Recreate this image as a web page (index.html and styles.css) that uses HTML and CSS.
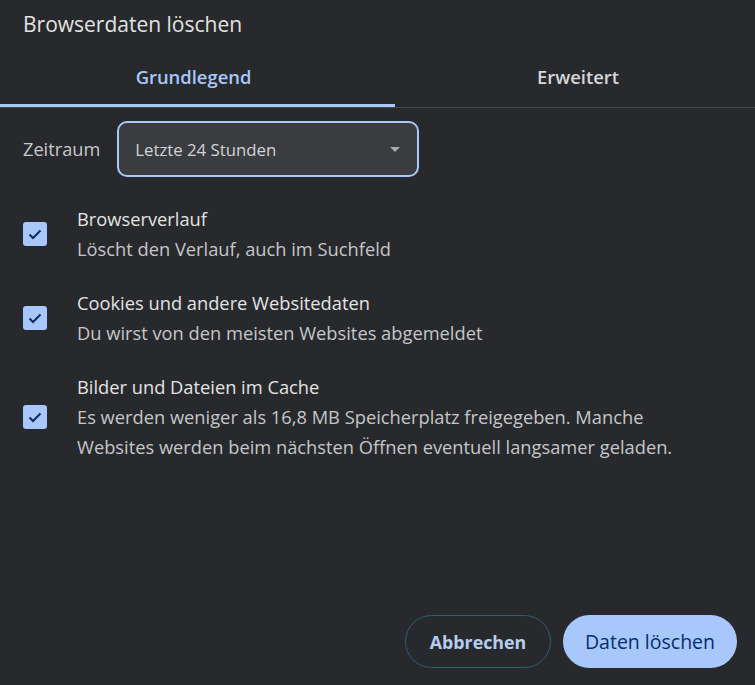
FILE: index.html
```html
<!DOCTYPE html>
<html lang="de">
<head>
  <meta charset="UTF-8">
  <title>Browserdaten löschen</title>
  <link rel="stylesheet" href="styles.css">
</head>
<body>
  <div class="dialog">
    <h1>Browserdaten löschen</h1>

    <div class="tabs">
      <div class="tab active">Grundlegend</div>
      <div class="tab">Erweitert</div>
    </div>

    <div class="range">
      <span class="range-label">Zeitraum</span>
      <div class="select">
        <span>Letzte 24 Stunden</span>
        <span class="arrow"></span>
      </div>
    </div>

    <div class="options">
      <div class="option">
        <span class="check"><svg viewBox="0 0 24 24" width="24" height="24"><path d="M6.5 12.5l3.5 3.5l7.5-7.5" fill="none" stroke="#0b2a5e" stroke-width="2"/></svg></span>
        <div class="option-text">
          <div class="option-title">Browserverlauf</div>
          <div class="option-desc">Löscht den Verlauf, auch im Suchfeld</div>
        </div>
      </div>
      <div class="option">
        <span class="check"><svg viewBox="0 0 24 24" width="24" height="24"><path d="M6.5 12.5l3.5 3.5l7.5-7.5" fill="none" stroke="#0b2a5e" stroke-width="2"/></svg></span>
        <div class="option-text">
          <div class="option-title">Cookies und andere Websitedaten</div>
          <div class="option-desc">Du wirst von den meisten Websites abgemeldet</div>
        </div>
      </div>
      <div class="option">
        <span class="check"><svg viewBox="0 0 24 24" width="24" height="24"><path d="M6.5 12.5l3.5 3.5l7.5-7.5" fill="none" stroke="#0b2a5e" stroke-width="2"/></svg></span>
        <div class="option-text">
          <div class="option-title">Bilder und Dateien im Cache</div>
          <div class="option-desc">Es werden weniger als 16,8 MB Speicherplatz freigegeben. Manche Websites werden beim nächsten Öffnen eventuell langsamer geladen.</div>
        </div>
      </div>
    </div>

    <div class="actions">
      <button class="btn-outline">Abbrechen</button>
      <button class="btn-filled">Daten löschen</button>
    </div>
  </div>
</body>
</html>
```

FILE: styles.css
```css
body {
  margin: 0;
  background-color: #28292c;
  color: #e3e3e3;
  font-family: 'Open Sans', sans-serif;
}
.dialog {
  display: flex;
  flex-direction: column;
  min-height: 100vh;
}
h1 {
  margin: 0;
  padding: 9px 23px 0;
  font-size: 21px;
  font-weight: 400;
  line-height: 30px;
  color: #e3e3e3;
}
.tabs {
  display: grid;
  grid-template-columns: 395px 1fr;
  border-bottom: 1px solid #47494d;
  margin-top: 15px;
}
.tab {
  text-align: center;
  font-size: 18.4px;
  font-weight: 600;
  color: #d6d7d9;
  line-height: 24px;
  padding: 11px 0 15px 6px;
  border-bottom: 3px solid transparent;
}
.tab.active {
  padding: 11px 8px 15px 0;
  color: #a8c7fa;
  border-bottom-color: #a8c7fa;
}
.range {
  display: flex;
  align-items: center;
  gap: 17px;
  padding: 0 23px;
  margin-top: 13px;
}
.range-label {
  font-size: 18.2px;
  color: #c7c8ca;
}
.select {
  box-sizing: border-box;
  width: 302px;
  height: 56px;
  display: flex;
  align-items: center;
  justify-content: space-between;
  padding: 0 17px 0 16px;
  border: 2px solid #a8c7fa;
  border-radius: 10px;
  background-color: #3b3c3f;
  font-size: 16.8px;
  color: #d2d3d5;
}
.arrow {
  width: 0;
  height: 0;
  border-left: 5px solid transparent;
  border-right: 5px solid transparent;
  border-top: 5px solid #a9aaad;
}
.options {
  display: flex;
  flex-direction: column;
  gap: 24px;
  margin-top: 27px;
  padding: 0 23px;
}
.option {
  display: flex;
  align-items: center;
  gap: 30px;
}
.check {
  flex: none;
  width: 24px;
  height: 24px;
  border-radius: 3px;
  background-color: #a8c7fa;
}
.check svg {
  display: block;
}
.option-text {
  font-size: 18.3px;
  line-height: 30px;
}
.option-title {
  color: #e3e3e3;
}
.option-desc {
  color: #c4c6c8;
  max-width: 612px;
}
.actions {
  margin-top: auto;
  display: flex;
  justify-content: flex-end;
  gap: 12px;
  padding: 0 18px 17px 0;
}
.actions button {
  height: 53px;
  border-radius: 27px;
  font-family: 'Open Sans', sans-serif;
  font-size: 17.8px;
  cursor: pointer;
}
.actions .btn-outline {
  width: 146px;
  background: transparent;
  border: 1px solid #2b6075;
  color: #b7cdf0;
  font-weight: 700;
}
.actions .btn-filled {
  width: 174px;
  background-color: #a8c7fa;
  border: none;
  color: #062e6f;
  font-weight: 500;
  font-size: 19.5px;
}
```
